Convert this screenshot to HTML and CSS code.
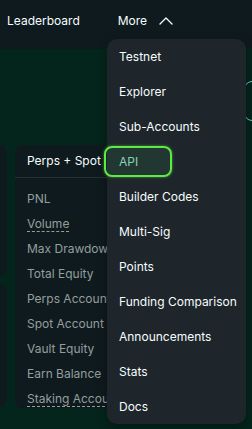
FILE: index.html
```html
<!DOCTYPE html>
<html>
  <head>
    <meta charset="UTF-8" />
    <meta name="viewport" content="width=device-width, initial-scale=1.0" />
    <title>Portfolio</title>
    <link rel="stylesheet" href="styles.css">
  </head>
  <body>
    <!-- 顶部导航 -->
    <nav class="top-nav">
      <span class="nav-link">Leaderboard</span>
      <span class="nav-link nav-more">
        More
        <svg class="chevron" width="14" height="8" viewBox="0 0 14 8">
          <path d="M1 7 L7 1 L13 7" fill="none" stroke="#f6fefd" stroke-width="1.3" stroke-linecap="round" stroke-linejoin="round"/>
        </svg>
      </span>
    </nav>

    <main class="page">
      <div class="toolbar">
        <div class="outline-btn"></div>
      </div>

      <div class="panels">
        <div class="side-col">
          <div class="side-card side-card-top"></div>
          <div class="side-card side-card-bottom"></div>
        </div>

        <!-- 右侧被下拉菜单遮住 -->
        <section class="stats-card">
          <div class="stats-header">Perps + Spot</div>
          <div class="stats-list">
            <div class="stat-row">PNL</div>
            <div class="stat-row"><span class="dashed">Volume</span></div>
            <div class="stat-row">Max Drawdown</div>
            <div class="stat-row">Total Equity</div>
            <div class="stat-row">Perps Account Equity</div>
            <div class="stat-row">Spot Account Equity</div>
            <div class="stat-row">Vault Equity</div>
            <div class="stat-row">Earn Balance</div>
            <div class="stat-row"><span class="dashed">Staking Account</span></div>
          </div>
        </section>
      </div>
    </main>

    <!-- More 下拉菜单 -->
    <div class="dropdown">
      <div class="menu-item">Testnet</div>
      <div class="menu-item">Explorer</div>
      <div class="menu-item">Sub-Accounts</div>
      <div class="menu-item active">API</div>
      <div class="menu-item">Builder Codes</div>
      <div class="menu-item">Multi-Sig</div>
      <div class="menu-item">Points</div>
      <div class="menu-item">Funding Comparison</div>
      <div class="menu-item">Announcements</div>
      <div class="menu-item">Stats</div>
      <div class="menu-item">Docs</div>
    </div>
  </body>
</html>
```

FILE: styles.css
```css
body {
  margin: 0;
  padding: 0;
  width: 252px;
  height: 429px;
  overflow: hidden;
  background: #04251b;
  font-family: Inter, "Noto Sans", sans-serif;
  color: #f6fefd;
  position: relative;
}

/* 顶部导航 */
.top-nav {
  height: 49px;
  background: #0f1a1f;
  display: flex;
  align-items: flex-start;
  padding: 13px 0 0 7px;
  box-sizing: border-box;
  gap: 38px;
  font-size: 12px;
  line-height: 16px;
}

.nav-more {
  display: flex;
  align-items: center;
  gap: 12px;
}

.chevron {
  margin-top: -1px;
}

/* 页面主体 */
.page {
  height: 380px;
  overflow: hidden;
}

.toolbar {
  height: 96px;
  display: flex;
  justify-content: flex-end;
  align-items: flex-start;
  padding-top: 32px;
  box-sizing: border-box;
}

.outline-btn {
  width: 40px;
  height: 38px;
  border: 1px solid #50d2c1;
  border-radius: 8px;
  margin-right: -34px;
}

.panels {
  display: flex;
  gap: 8px;
  margin-left: -20px;
}

.side-col {
  width: 27px;
  flex-shrink: 0;
  display: flex;
  flex-direction: column;
  gap: 6px;
}

.side-card {
  background: #0f1a1f;
  border-radius: 8px;
}

.side-card-top {
  height: 132px;
}

.side-card-bottom {
  height: 124px;
}

.stats-card {
  width: 93px;
  height: 263px;
  background: #0f1a1f;
  border-radius: 8px 0 0 8px;
  flex-shrink: 0;
  overflow: hidden;
}

.stats-header {
  height: 33px;
  padding: 8px 0 0 12px;
  box-sizing: border-box;
  font-size: 12px;
  white-space: nowrap;
  border-bottom: 1px solid #273035;
}

.stats-list {
  padding: 8px 0 0 12px;
}

.stat-row {
  height: 25px;
  line-height: 25px;
  font-size: 12px;
  color: #949e9c;
  white-space: nowrap;
}

.dashed {
  border-bottom: 1px dashed #949e9c;
}

/* 下拉菜单 */
.dropdown {
  position: absolute;
  left: 107px;
  top: 39px;
  width: 139px;
  height: 385px;
  background: #1e252b;
  border-radius: 10px;
  box-shadow: 0 4px 12px rgba(0, 0, 0, 0.3);
}

.menu-item {
  height: 35px;
  line-height: 35px;
  padding-left: 12px;
  font-size: 12px;
  white-space: nowrap;
}

.menu-item.active {
  position: relative;
  color: #8fd3bd;
}

.menu-item.active::before {
  content: "";
  position: absolute;
  left: -3px;
  top: 2px;
  width: 64px;
  height: 27px;
  border: 2px solid #5fe846;
  border-radius: 8px;
  background: rgba(80, 210, 120, 0.1);
  box-shadow: 0 0 3px rgba(95, 232, 70, 0.6);
}
```
